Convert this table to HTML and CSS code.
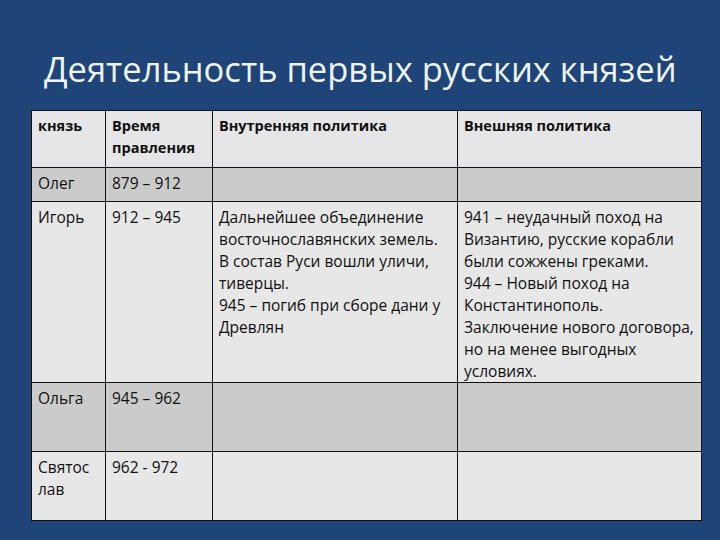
FILE: index.html
```html
<!DOCTYPE html>
<html lang="ru">
<head>
<meta charset="utf-8">
<title>Деятельность первых русских князей</title>
<link rel="stylesheet" href="styles.css">
</head>
<body>
<div class="slide">
  <h1 class="title">Деятельность первых русских князей</h1>
  <table class="grid">
    <colgroup>
      <col class="c1"><col class="c2"><col class="c3"><col class="c4">
    </colgroup>
    <tr class="head">
      <th>князь</th>
      <th>Время правления</th>
      <th>Внутренняя политика</th>
      <th>Внешняя политика</th>
    </tr>
    <tr class="dark r-oleg">
      <td>Олег</td><td>879 – 912</td><td></td><td></td>
    </tr>
    <tr class="light r-igor">
      <td>Игорь</td><td>912 – 945</td>
      <td>Дальнейшее объединение восточнославянских земель.<br>В состав Руси вошли уличи, тиверцы.<br>945 – погиб при сборе дани у Древлян</td>
      <td>941 – неудачный поход на Византию, русские корабли были сожжены греками.<br>944 – Новый поход на Константинополь.<br>Заключение нового договора, но на менее выгодных условиях.</td>
    </tr>
    <tr class="dark r-olga">
      <td>Ольга</td><td>945 – 962</td><td></td><td></td>
    </tr>
    <tr class="light r-svy">
      <td>Святос<br>лав</td><td>962 - 972</td><td></td><td></td>
    </tr>
  </table>
</div>
</body>
</html>
```
FILE: styles.css
```css
html, body {
  margin: 0;
  padding: 0;
}
body {
  background: #1f4477;
  font-family: "Open Sans", "DejaVu Sans", sans-serif;
}
.slide {
  width: 720px;
  height: 540px;
  padding: 0 0 0 31px;
  box-sizing: border-box;
  overflow: hidden;
}
.title {
  margin: 0;
  padding: 49px 0 0 13px;
  height: 110px;
  box-sizing: border-box;
  font-weight: 400;
  font-size: 34.5px;
  line-height: 40px;
  color: #eef4fa;
  white-space: nowrap;
}
.grid {
  border-collapse: collapse;
  table-layout: fixed;
  width: 670px;
  color: #111;
  font-size: 15.5px;
  line-height: 22px;
}
.c1 { width: 74px; }
.c2 { width: 107px; }
.c3 { width: 245px; }
.c4 { width: 244px; }
.grid th, .grid td {
  border: 1.5px solid #111;
  vertical-align: top;
  text-align: left;
  padding: 4px 5px 0 6px;
}
.grid th {
  font-weight: 700;
  font-size: 14.5px;
  padding-top: 4px;
}
.head { background: #e6e6e8; height: 57px; }
.dark { background: #cbcbcb; }
.light { background: #e7e7e7; }
.r-oleg { height: 34px; }
.r-igor { height: 180px; }
.r-olga { height: 69px; }
.r-svy { height: 69px; }
```
